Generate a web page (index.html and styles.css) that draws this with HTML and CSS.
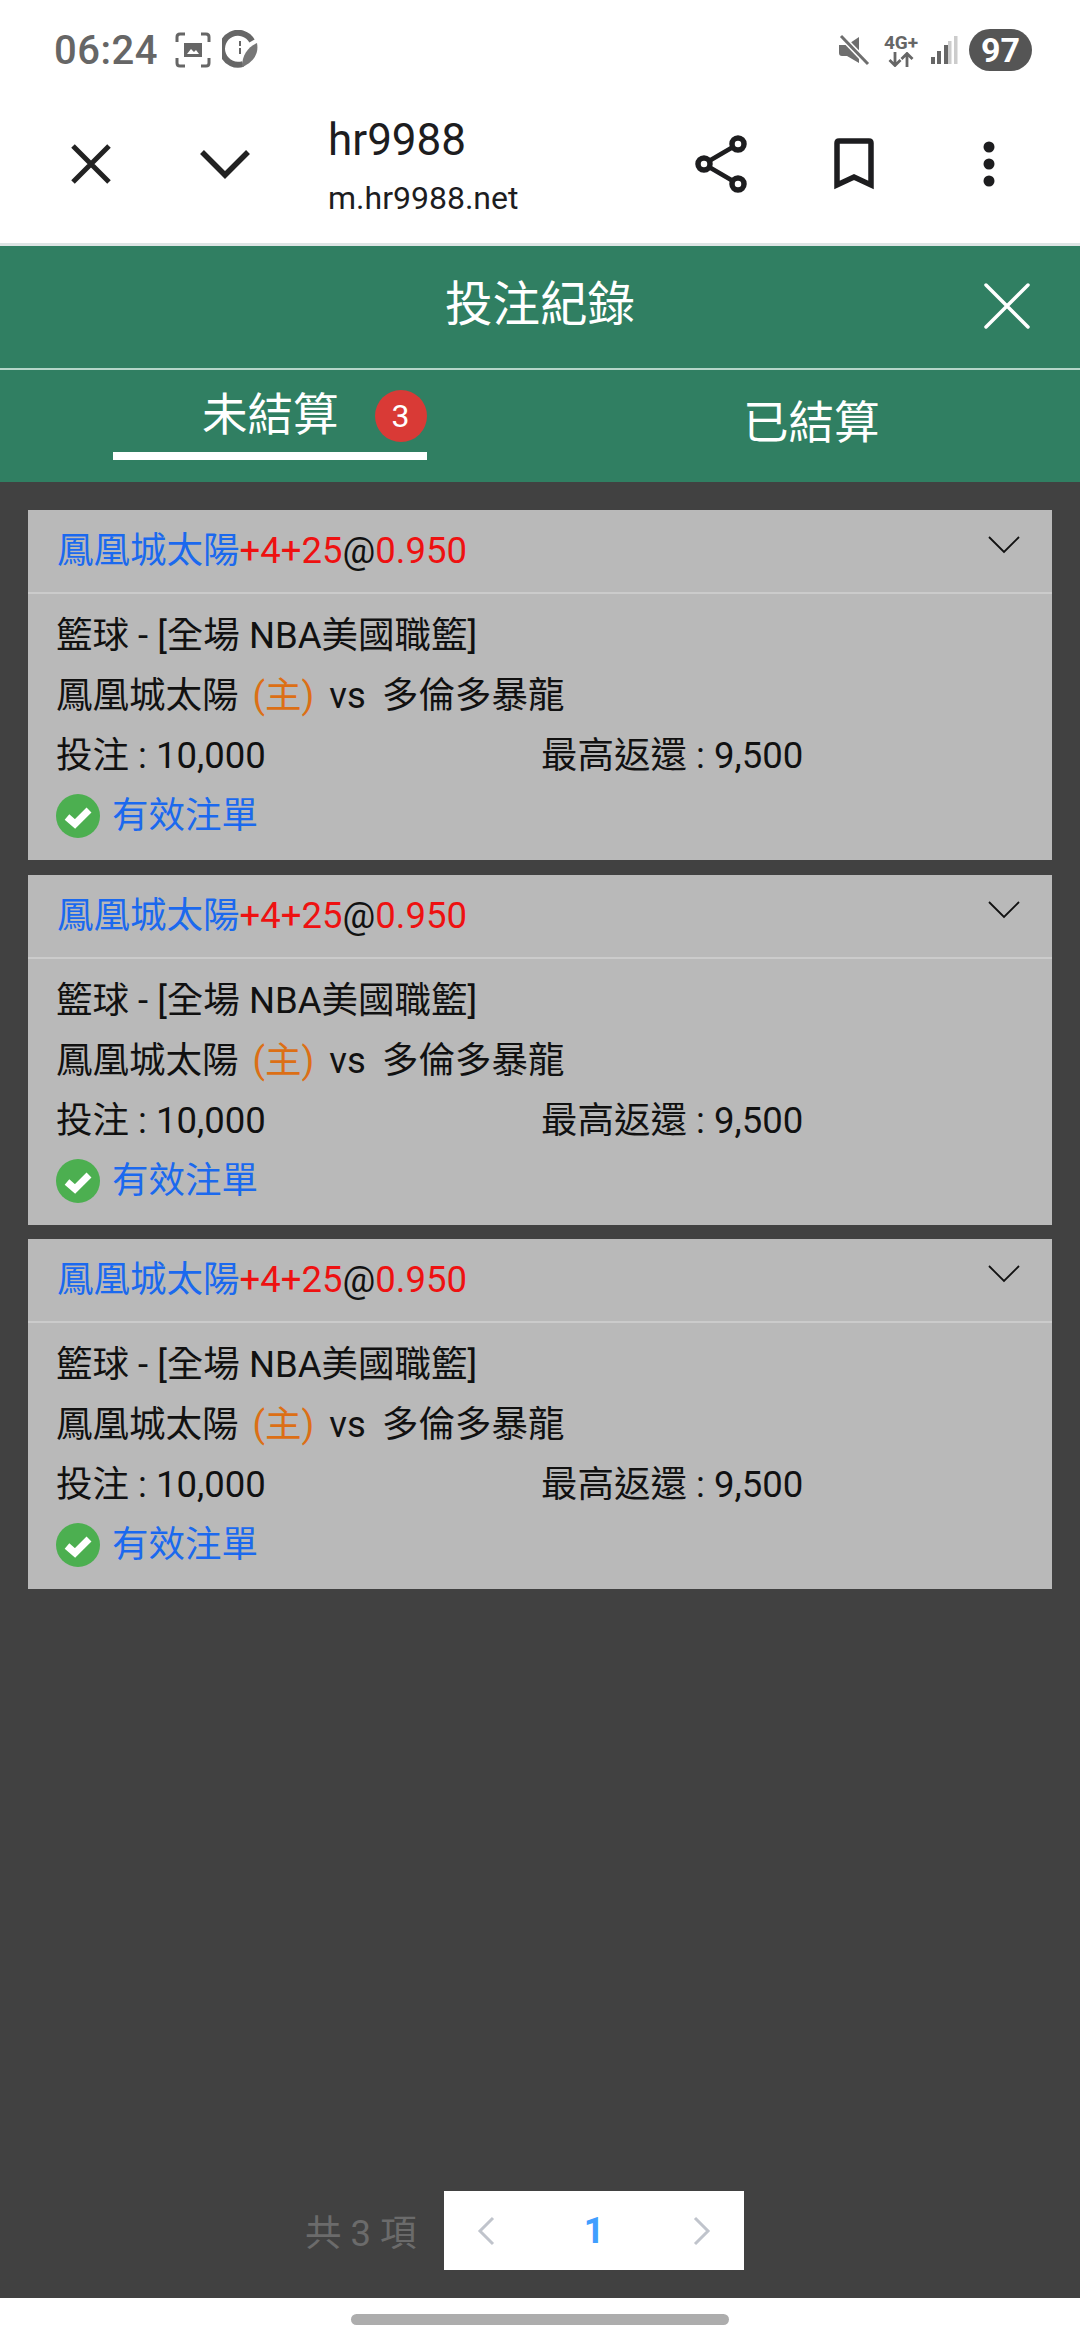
FILE: index.html
```html
<!DOCTYPE html>
<html lang="zh-Hant">
<head>
  <meta charset="UTF-8">
  <title>投注紀錄</title>
  <link rel="stylesheet" href="styles.css">
</head>
<body>

  <div class="status-bar">
    <span class="clock">06:24</span>
    <svg class="st-icon" width="36" height="36" viewBox="0 0 36 36">
      <path d="M2 10V5q0-3 3-3h5M26 2h5q3 0 3 3v5M34 26v5q0 3-3 3h-5M10 34H5q-3 0-3-3v-5" fill="none" stroke="#666" stroke-width="3"/>
      <path d="M9 11h18v14H9z" fill="#666"/>
      <path d="M12 22l4-5 3 3 2-2 3 4z" fill="#fff"/>
    </svg>
    <svg class="st-icon" width="36" height="40" viewBox="0 0 36 40">
      <path d="M30 11a16 16 0 1 0-9 23" fill="none" stroke="#666" stroke-width="6"/>
      <path d="M20 37c0-12 6-20 15-24 2 10-3 19-15 24z" fill="#777"/>
      <path d="M17 11h2v5h-2zM17 18h2v6h-2z" fill="#666"/>
    </svg>
    <span class="st-spacer"></span>
    <svg class="st-icon" width="32" height="32" viewBox="0 0 32 32">
      <path d="M1 11h8l12-8v26l-12-7H4q-3 0-3-3z" fill="#6e6e6e"/>
      <path d="M3 2l27 28" stroke="#fff" stroke-width="6"/>
      <path d="M3 2l27 28" stroke="#6e6e6e" stroke-width="3"/>
    </svg>
    <span class="net">
      <b>4G+</b>
      <svg width="26" height="15" viewBox="0 0 26 15">
        <path d="M7 0v13M1.500 8L7 13.500 12.500 8M19 15V2M13.500 7L19 1.500 24.500 7" fill="none" stroke="#666" stroke-width="2.800"/>
      </svg>
    </span>
    <svg class="st-icon signal" width="28" height="30" viewBox="0 0 28 30">
      <path d="M1 22h4v7H1zM7 16h4v13H7z" fill="#666"/>
      <path d="M14 10h4v19h-4z" fill="#666"/>
      <path d="M18 6h3.500v23H18zM24 1h3.500v28H24z" fill="#ccc"/>
    </svg>
    <span class="battery">97</span>
  </div>

  <div class="browser-bar">
    <svg class="bar-icon close-icon" width="42" height="42" viewBox="0 0 42 42">
      <path d="M3 3l36 36M39 3L3 39" stroke="#222" stroke-width="5" fill="none"/>
    </svg>
    <svg class="bar-icon down-icon" width="50" height="30" viewBox="0 0 50 30">
      <path d="M2 3l23 23L48 3" stroke="#222" stroke-width="5.500" fill="none"/>
    </svg>
    <div class="site">
      <div class="site-name">hr9988</div>
      <div class="site-url">m.hr9988.net</div>
    </div>
    <svg class="bar-icon share-icon" width="52" height="58" viewBox="0 0 52 58">
      <circle cx="43" cy="9" r="6" fill="none" stroke="#1d1d1f" stroke-width="5.500"/>
      <circle cx="9" cy="29" r="6" fill="none" stroke="#1d1d1f" stroke-width="5.500"/>
      <circle cx="43" cy="49" r="6" fill="none" stroke="#1d1d1f" stroke-width="5.500"/>
      <path d="M38 12L14 26M14 32l24 14" stroke="#1d1d1f" stroke-width="4.500"/>
    </svg>
    <svg class="bar-icon mark-icon" width="40" height="52" viewBox="0 0 40 52">
      <path d="M3 47V5q0-2 2-2h30q2 0 2 2v42L20 39z" fill="none" stroke="#1d1d1f" stroke-width="5.500"/>
    </svg>
    <svg class="bar-icon more-icon" width="12" height="46" viewBox="0 0 12 46">
      <circle cx="6" cy="6" r="5.500" fill="#1d1d1f"/>
      <circle cx="6" cy="23" r="5.500" fill="#1d1d1f"/>
      <circle cx="6" cy="40" r="5.500" fill="#1d1d1f"/>
    </svg>
  </div>

  <div class="green-head">
    <div class="title-row">
      <span class="title">投注紀錄</span>
      <svg class="title-close" width="46" height="46" viewBox="0 0 46 46">
        <path d="M2 2l42 42M44 2L2 44" stroke="#fff" stroke-width="3.500" stroke-linecap="round"/>
      </svg>
    </div>
    <div class="tabs">
      <div class="tab tab-active">未結算<span class="count">3</span></div>
      <div class="tab tab-done">已結算</div>
    </div>
  </div>

  <div class="content">
    <div class="list">

      <div class="card">
        <div class="card-head">
          <span><span class="blue">鳳凰城太陽</span><span class="red">+4+25</span>@<span class="red">0.950</span></span>
          <svg class="arrow" width="32" height="18" viewBox="0 0 32 18"><path d="M1 1l15 15L31 1" fill="none" stroke="#111" stroke-width="1.800"/></svg>
        </div>
        <div class="card-body">
          <div class="line">籃球 - [全場 NBA美國職籃]</div>
          <div class="line">鳳凰城太陽 <span class="orange">(主)</span> vs <span class="away">多倫多暴龍</span></div>
          <div class="line amounts"><span class="stake">投注 : 10,000</span><span>最高返還 : 9,500</span></div>
          <div class="line valid">
            <svg width="44" height="44" viewBox="0 0 44 44"><circle cx="22" cy="22" r="22" fill="#4caf50"/><path d="M11 23l8 7 14-14" fill="none" stroke="#fff" stroke-width="7"/></svg>
            <span class="blue">有效注單</span>
          </div>
        </div>
      </div>

      <div class="card">
        <div class="card-head">
          <span><span class="blue">鳳凰城太陽</span><span class="red">+4+25</span>@<span class="red">0.950</span></span>
          <svg class="arrow" width="32" height="18" viewBox="0 0 32 18"><path d="M1 1l15 15L31 1" fill="none" stroke="#111" stroke-width="1.800"/></svg>
        </div>
        <div class="card-body">
          <div class="line">籃球 - [全場 NBA美國職籃]</div>
          <div class="line">鳳凰城太陽 <span class="orange">(主)</span> vs <span class="away">多倫多暴龍</span></div>
          <div class="line amounts"><span class="stake">投注 : 10,000</span><span>最高返還 : 9,500</span></div>
          <div class="line valid">
            <svg width="44" height="44" viewBox="0 0 44 44"><circle cx="22" cy="22" r="22" fill="#4caf50"/><path d="M11 23l8 7 14-14" fill="none" stroke="#fff" stroke-width="7"/></svg>
            <span class="blue">有效注單</span>
          </div>
        </div>
      </div>

      <div class="card">
        <div class="card-head">
          <span><span class="blue">鳳凰城太陽</span><span class="red">+4+25</span>@<span class="red">0.950</span></span>
          <svg class="arrow" width="32" height="18" viewBox="0 0 32 18"><path d="M1 1l15 15L31 1" fill="none" stroke="#111" stroke-width="1.800"/></svg>
        </div>
        <div class="card-body">
          <div class="line">籃球 - [全場 NBA美國職籃]</div>
          <div class="line">鳳凰城太陽 <span class="orange">(主)</span> vs <span class="away">多倫多暴龍</span></div>
          <div class="line amounts"><span class="stake">投注 : 10,000</span><span>最高返還 : 9,500</span></div>
          <div class="line valid">
            <svg width="44" height="44" viewBox="0 0 44 44"><circle cx="22" cy="22" r="22" fill="#4caf50"/><path d="M11 23l8 7 14-14" fill="none" stroke="#fff" stroke-width="7"/></svg>
            <span class="blue">有效注單</span>
          </div>
        </div>
      </div>

    </div>

    <div class="pager">
      <span class="total">共 3 項</span>
      <div class="pager-box">
        <svg width="18" height="30" viewBox="0 0 18 30"><path d="M16 2L3 15l13 13" fill="none" stroke="#c0c4cc" stroke-width="3"/></svg>
        <span class="page-no">1</span>
        <svg width="18" height="30" viewBox="0 0 18 30"><path d="M2 2l13 13L2 28" fill="none" stroke="#c0c4cc" stroke-width="3"/></svg>
      </div>
    </div>
  </div>

  <div class="nav-bar"><div class="nav-pill"></div></div>

</body>
</html>
```

FILE: styles.css
```css
body {
  margin: 0;
  width: 1080px;
  height: 2340px;
  overflow: hidden;
  display: flex;
  flex-direction: column;
  background: #fff;
  font-family: Roboto, "Noto Sans CJK TC", sans-serif;
}

.status-bar {
  height: 88px;
  flex: none;
  display: flex;
  align-items: center;
  padding: 12px 48px 0 54px;
  box-sizing: border-box;
  color: #666;
}

.clock {
  font-size: 40px;
  font-weight: 500;
  letter-spacing: 0.5px;
  margin-right: 17px;
}

.st-icon {
  margin-right: 11px;
}

.st-spacer {
  flex: 1;
}

.net {
  display: flex;
  flex-direction: column;
  align-items: center;
  margin: 0 12px 0 3px;
  font-size: 19px;
  line-height: 19px;
  width: 34px;
}

.net b {
  white-space: nowrap;
}

.signal {
  margin-right: 11px;
}

.battery {
  width: 63px;
  height: 42px;
  border-radius: 21px;
  background: #555;
  color: #fff;
  font-size: 34px;
  font-weight: 700;
  line-height: 42px;
  text-align: center;
}

.browser-bar {
  height: 151px;
  flex: none;
  display: flex;
  align-items: center;
  border-bottom: 3px solid #dde5e4;
  padding-bottom: 4px;
}

.bar-icon {
  flex: none;
}

.close-icon {
  margin-left: 70px;
}

.down-icon {
  margin-left: 88px;
}

.site {
  margin-left: 78px;
  width: 367px;
  padding-top: 11px;
  color: #1d1d1f;
}

.site-name {
  font-size: 44px;
  line-height: 58px;
}

.site-url {
  font-size: 32px;
  line-height: 58px;
}

.mark-icon {
  margin-left: 87px;
}

.more-icon {
  margin-left: 109px;
}

.green-head {
  flex: none;
  background: #307f62;
  color: #fff;
}

.title-row {
  height: 108px;
  padding-bottom: 14px;
  display: flex;
  align-items: center;
  justify-content: center;
  position: relative;
  border-bottom: 2px solid #b5d6c9;
}

.title {
  font-size: 47.5px;
}

.title-close {
  position: absolute;
  right: 50px;
  top: 37px;
}

.tabs {
  height: 112px;
  display: flex;
  box-sizing: border-box;
}

.tab {
  font-size: 45.5px;
}

.tab-active {
  width: 314px;
  height: 90px;
  margin-left: 113px;
  padding-top: 20px;
  box-sizing: border-box;
  border-bottom: 8px solid #fff;
  display: flex;
  align-items: flex-start;
  line-height: 52px;
  padding-left: 89px;
}

.count {
  width: 52px;
  height: 52px;
  margin-left: 36px;
  border-radius: 50%;
  background: #d93a36;
  font-size: 32px;
  line-height: 52px;
  text-align: center;
  flex: none;
}

.tab-done {
  margin-left: 316px;
  padding-top: 24px;
  line-height: 60px;
}

.content {
  flex: 1;
  display: flex;
  flex-direction: column;
  justify-content: space-between;
  background: #414141;
  padding: 28px 28px 28px 28px;
}

.list {
  display: flex;
  flex-direction: column;
  gap: 14.5px;
}

.card {
  background: #b9b9b9;
  height: 350px;
}

.card-head {
  height: 82px;
  display: flex;
  justify-content: space-between;
  padding: 0 32px 0 29px;
  border-bottom: 2px solid #cbcbcb;
  font-size: 36.5px;
  line-height: 82px;
  color: #111;
}

.arrow {
  margin-top: 26px;
}

.card-body {
  padding: 12px 29px 0 28px;
  color: #111;
  font-size: 36.5px;
}

.line {
  height: 60px;
  line-height: 60px;
  white-space: nowrap;
}

.amounts {
  display: flex;
}

.stake {
  width: 485px;
}

.valid {
  display: flex;
  align-items: center;
}

.valid svg {
  margin-right: 12px;
  flex: none;
}

.blue {
  color: #1b69ee;
}

.red {
  color: #ee1111;
}

.orange {
  color: #dc6f15;
  margin: 0 6px 0 5px;
}

.away {
  margin-left: 7px;
}

.pager {
  display: flex;
  align-items: center;
  justify-content: flex-start;
  margin-left: 277px;
}

.total {
  color: #6b6b6b;
  font-size: 36.5px;
  width: 139px;
}

.pager-box {
  width: 300px;
  height: 79px;
  background: #fff;
  display: flex;
  align-items: center;
  justify-content: space-between;
  padding: 0 33px;
  box-sizing: border-box;
}

.page-no {
  color: #409eff;
  font-size: 36px;
  font-weight: 700;
}

.nav-bar {
  height: 42px;
  flex: none;
  display: flex;
  justify-content: center;
  padding-top: 16px;
  box-sizing: border-box;
}

.nav-pill {
  width: 378px;
  height: 11px;
  border-radius: 6px;
  background: #adadad;
}
```
